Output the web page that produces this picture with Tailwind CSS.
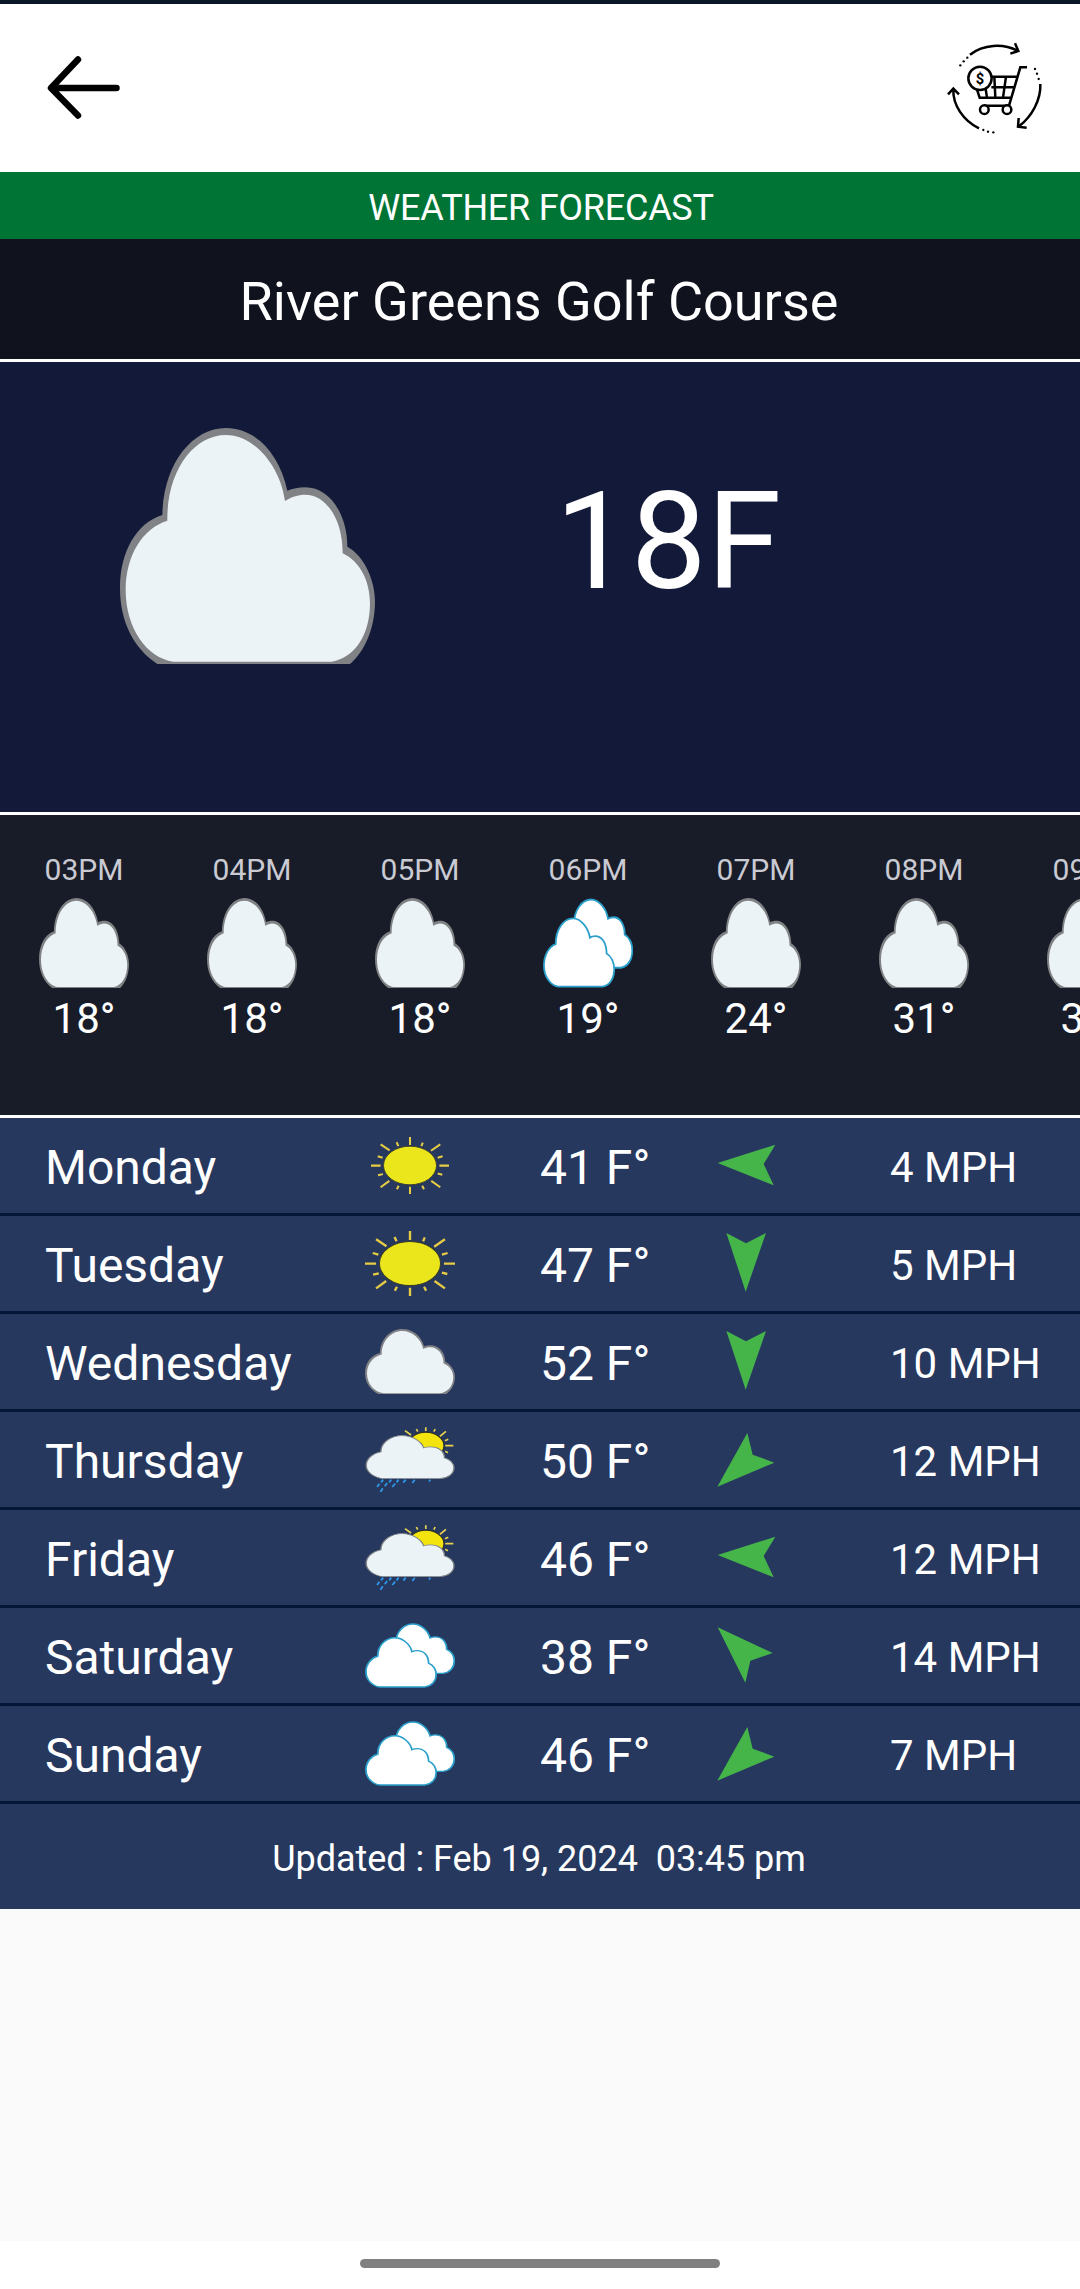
<!DOCTYPE html>
<html lang="en">
<head>
    <meta charset="UTF-8" />
    <meta name="viewport" content="width=device-width, initial-scale=1" />
    <script src="https://cdn.jsdelivr.net/npm/@tailwindcss/browser@4"></script>
    <title>Weather Forecast</title>
</head>
<body class="bg-[#fafafa] text-white font-['Roboto',sans-serif] min-h-screen flex flex-col overflow-x-hidden">
    <!-- Icons -->
    <svg class="hidden">
        <symbol id="icon-cloud" viewBox="0 0 765 708" preserveAspectRatio="none">
            <path fill="#808285" d="M112 708C40 660 0 580 0 480C0 370 50 285 127 261C130 110 215 0 318 0C405 0 478 75 502 188C518 183 536 178 555 178C630 178 682 260 682 356C735 385 765 460 765 520C765 600 735 670 690 708Z" />
            <path fill="#ebf3f6" d="M160 701C80 690 17 600 17 486C17 380 70 300 142 278C140 130 220 21 318 21C400 21 480 110 495 219C512 207 535 200 555 200C620 200 668 275 668 376C720 400 750 460 750 526C750 620 705 690 635 701Z" />
        </symbol>
        <symbol id="icon-clouds" viewBox="0 0 268 195" preserveAspectRatio="none">
            <g fill="#fff" stroke="#2a9fca" stroke-width="19">
                <path transform="translate(54 1) scale(.28 .214)" d="M160 701C80 690 10 600 10 486C10 380 70 290 135 270C135 120 220 10 318 10C400 10 480 100 499 205C512 197 535 190 555 190C630 190 676 265 676 366C728 392 757 460 757 526C757 620 710 690 635 701Z" />
                <path transform="translate(0 42) scale(.28 .214)" d="M160 701C80 690 10 600 10 486C10 380 70 290 135 270C135 120 220 10 318 10C400 10 480 100 499 205C512 197 535 190 555 190C630 190 676 265 676 366C728 392 757 460 757 526C757 620 710 690 635 701Z" />
            </g>
        </symbol>
        <symbol id="icon-sun" viewBox="0 0 268 195" preserveAspectRatio="none">
            <path fill="none" stroke="#e6cb45" stroke-width="7" d="M134 0V27M134 170V195M0 98H33M235 98H268M33 25L64 46M238 25L206 47M33 172L63 150M238 172L207 150M88 18L94 31M178 19L173 31M95 167L89 179M176 167L182 179M23 66L40 71M246 66L229 71M24 131L41 127M245 129L229 125" />
            <ellipse cx="134" cy="97.5" rx="91" ry="66" fill="#ebe61c" stroke="#3b3d2a" stroke-width="3" />
        </symbol>
        <symbol id="icon-rain" viewBox="0 0 268 195" preserveAspectRatio="none">
            <path fill="none" stroke="#e8d24e" stroke-width="5" d="M181 1V12M153 6L157 14M209 6L205 14M119 11L137 24M241 13L223 28M248 37L238 41M239 56H263M239 73L247 77" />
            <ellipse cx="181" cy="56" rx="54" ry="40" fill="#f3e40d" stroke="#2b2d2a" stroke-width="3" />
            <g transform="translate(0 24) scale(.35 .187)">
                <path fill="#ebf3f6" stroke="#7c8084" stroke-width="12" d="M160 701C80 690 10 600 10 486C10 380 70 290 135 270C135 120 220 10 318 10C400 10 480 100 499 205C512 197 535 190 555 190C630 190 676 265 676 366C728 392 757 460 757 526C757 620 710 690 635 701Z" />
            </g>
            <path fill="none" stroke="#2f96e6" stroke-width="5.5" d="M54 158L48 166M78 158L72 166M100 158L94 166M121 158L114 167M148 158L141 168M43 170L36 180M66 168L59 178M90 170L81 180M53 184L46 195M194 158L191 164" />
        </symbol>
        <symbol id="wind-w" viewBox="0 0 192 192"><path fill="#45b54a" d="M11 87L184 32L149 90L179 154Z" /></symbol>
        <symbol id="wind-s" viewBox="0 0 192 192"><path fill="#45b54a" d="M37 3L96 34L156 3L95 179Z" /></symbol>
        <symbol id="wind-sw" viewBox="0 0 192 192"><path fill="#45b54a" d="M10 176L100 15L116 80L181 104Z" /></symbol>
        <symbol id="wind-nw" viewBox="0 0 192 192"><path fill="#45b54a" d="M11 10L176 87L109 110L94 176Z" /></symbol>
    </svg>

    <!-- Header -->
    <div class="h-1 bg-[#0b1626]"></div>
    <header class="h-[168px] bg-white flex items-start justify-between pl-11 pr-[35px]">
        <button class="mt-[50px]">
            <svg class="w-20 h-[68px]" viewBox="44 54 80 68" fill="none" stroke="#000" stroke-width="6.5" stroke-linecap="round" stroke-linejoin="round">
                <path d="M116.500 88H51.500M78 59.500L51 88L78 115.500" />
            </svg>
        </button>
        <button class="mt-9">
            <svg class="w-[100px] h-[100px]" viewBox="45 60 300 300" fill="none" stroke="#000" stroke-width="7.500">
                <path d="M120 104C160 72 220 70 262 92M255 70L265 93L241 101" />
                <path d="M331 192C333 240 305 290 268 318M266 294L264 320L290 323" />
                <path d="M147 325C100 302 68 255 70 208M54 223L70 206L87 223" />
                <g fill="#000" stroke="none">
                    <circle cx="112" cy="113" r="3.500" /><circle cx="101" cy="124" r="3.500" /><circle cx="91" cy="136" r="3.500" />
                    <circle cx="315" cy="147" r="3.500" /><circle cx="321" cy="161" r="3.500" /><circle cx="326" cy="177" r="3.500" />
                    <circle cx="160" cy="330" r="3.500" /><circle cx="174" cy="335" r="3.500" /><circle cx="190" cy="337" r="3.500" />
                </g>
                <circle cx="150" cy="175" r="35" />
                <text x="150" y="191" text-anchor="middle" font-size="44" font-weight="700" fill="#000" stroke="none">$</text>
                <path d="M291 142H271L237 257H163M186 170H262M184 202H252M141 209L149 233H243M193 170L196 233M228 170L219 233M167 207L171 233" />
                <circle cx="163" cy="269" r="13" fill="#fff" />
                <circle cx="231" cy="269" r="13" fill="#fff" />
            </svg>
        </button>
    </header>

    <!-- Title -->
    <div class="h-[67px] pt-1 pl-0.5 bg-[#007434] flex items-center justify-center text-[36px] tracking-[-0.25px]">WEATHER FORECAST</div>
    <h1 class="h-[123px] pt-1 pr-0.5 bg-[#10121d] border-b-3 border-white flex items-center justify-center text-[54px]">River Greens Golf Course</h1>

    <!-- Current weather -->
    <section class="h-[453px] bg-[#131a39] border-b-3 border-white flex items-start pl-[120px]">
        <svg class="mt-[66px] w-[255px] h-[236px]"><use href="#icon-cloud" /></svg>
        <p class="mt-[100px] ml-[180px] text-[135px] leading-[160px]">18F</p>
    </section>

    <!-- Hourly forecast -->
    <section id="hourly" class="h-[303px] bg-[#181b28] border-b-3 border-white flex pt-[37px] overflow-hidden"></section>

    <!-- Daily forecast -->
    <section id="daily" class="bg-[#27385f]"></section>
    <p class="h-[105px] pt-1 pr-0.5 bg-[#27385f] flex items-center justify-center text-[36px] tracking-[-0.03px] whitespace-pre">Updated : Feb 19, 2024  03:45 pm</p>

    <!-- Navigation bar -->
    <footer class="mt-auto h-12 bg-white flex items-start justify-center pt-[18px]">
        <div class="w-[360px] h-[9px] rounded-full bg-[#808080]"></div>
    </footer>

    <script>
        const hours = [
            { time: '03PM', icon: 'cloud', temp: 18 },
            { time: '04PM', icon: 'cloud', temp: 18 },
            { time: '05PM', icon: 'cloud', temp: 18 },
            { time: '06PM', icon: 'clouds', temp: 19 },
            { time: '07PM', icon: 'cloud', temp: 24 },
            { time: '08PM', icon: 'cloud', temp: 31 },
            { time: '09PM', icon: 'cloud', temp: 33 },
        ];

        const days = [
            { name: 'Monday', icon: 'sun', small: true, temp: 41, wind: 'w', speed: 4 },
            { name: 'Tuesday', icon: 'sun', temp: 47, wind: 's', speed: 5 },
            { name: 'Wednesday', icon: 'cloud', temp: 52, wind: 's', speed: 10 },
            { name: 'Thursday', icon: 'rain', temp: 50, wind: 'sw', speed: 12 },
            { name: 'Friday', icon: 'rain', temp: 46, wind: 'w', speed: 12 },
            { name: 'Saturday', icon: 'clouds', temp: 38, wind: 'nw', speed: 14 },
            { name: 'Sunday', icon: 'clouds', temp: 46, wind: 'sw', speed: 7 },
        ];

        document.getElementById('hourly').innerHTML = hours.map((h) => `
            <div class="w-[168px] shrink-0 flex flex-col items-center">
                <span class="text-[30px] leading-9 text-[#c9cad2]">${h.time}</span>
                <svg class="mt-2.5 w-[90px] h-[90px]"><use href="#icon-${h.icon}" /></svg>
                <span class="mt-[7px] text-[42px] leading-[48px]">${h.temp}°</span>
            </div>`).join('');

        document.getElementById('daily').innerHTML = days.map((d) => `
            <div class="h-[98px] pl-[45px] border-b-3 border-[#051638] grid grid-cols-[320px_175px_174px_176px_1fr] items-center text-[48px]">
                <span class="pt-1">${d.name}</span>
                <div class="w-[90px] flex justify-center">
                    <svg class="${d.small ? 'w-[78px] h-[57px]' : 'w-[90px] h-[65px]'}"><use href="#icon-${d.icon}" /></svg>
                </div>
                <span class="pt-1">${d.temp} F°</span>
                <svg class="w-16 h-16"><use href="#wind-${d.wind}" /></svg>
                <span class="pt-1 text-[42px]">${d.speed} MPH</span>
            </div>`).join('');
    </script>
</body>
</html>
